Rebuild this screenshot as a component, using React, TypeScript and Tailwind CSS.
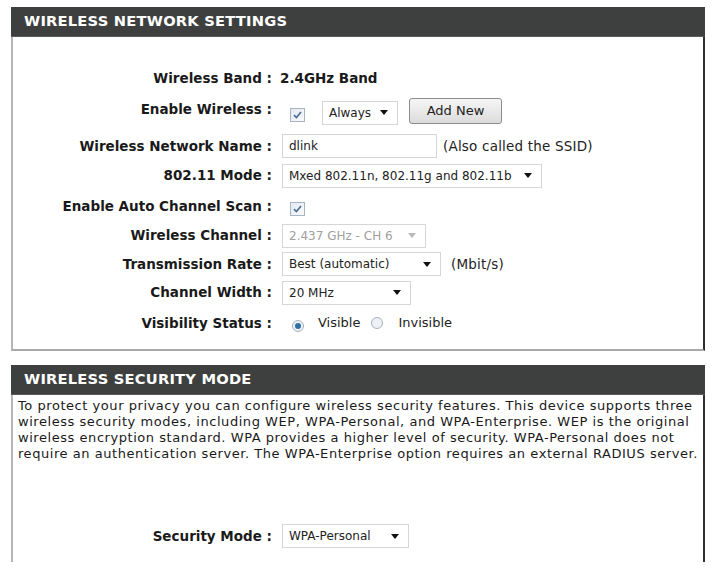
import React from "react";

const font = { fontFamily: '"DejaVu Sans", Verdana, sans-serif' };

const Check = () => (
  <span className="inline-flex h-[14px] w-[15px] items-center justify-center border border-[#a9b4c2] bg-gradient-to-br from-[#e4eaf2] to-[#f8fafc]">
    <svg width="9" height="8" viewBox="0 0 9 8">
      <path d="M1 4.2 L3.4 6.5 L8 1" fill="none" stroke="#4a6a96" strokeWidth="1.6" />
    </svg>
  </span>
);

const Arrow = ({ muted }: { muted?: boolean }) => (
  <svg width="8" height="5" viewBox="0 0 8 5" className="shrink-0">
    <path d="M0 0 H8 L4 5 Z" fill={muted ? "#b8b8b8" : "#111"} />
  </svg>
);

const Select = ({ text, w, muted }: { text: string; w: string; muted?: boolean }) => (
  <div className={`flex h-[24px] items-center justify-between border border-[#d6d6d6] bg-white pl-[6px] pr-[9px] text-[12px] ${w} ${muted ? "text-[#a0a0a0]" : "text-[#222]"}`}>
    <span className="whitespace-nowrap">{text}</span>
    <Arrow muted={muted} />
  </div>
);

const Row = ({ label, children, cls }: { label: string; children?: React.ReactNode; cls: string }) => (
  <div className={`flex items-center ${cls}`}>
    <div className="w-[259px] shrink-0 whitespace-nowrap text-right text-[13.5px] font-bold text-[#1a1a1a]">{label}</div>
    <div className="ml-[10px] flex items-center">{children}</div>
  </div>
);

const Radio = ({ on }: { on?: boolean }) => (
  <span className="inline-flex h-[12px] w-[12px] items-center justify-center rounded-full border border-[#a6b0bc] bg-[#eef1f5]">
    {on && <span className="h-[6px] w-[6px] rounded-full bg-[#2f6fa8]" />}
  </span>
);

const Header = ({ title }: { title: string }) => (
  <div className="flex h-[30px] items-center border-b border-b-[#5a5b5b] bg-[#3e3f3f] pl-[13px] text-[14.7px] font-bold tracking-[0.2px] text-white">
    {title}
  </div>
);

export default function App() {
  return (
    <div className="h-[574px] w-[713px] bg-white pt-[7px] pl-[11px]" style={font}>
      <div className="w-[694px]">
        <Header title="WIRELESS NETWORK SETTINGS" />
        <div className="h-[314px] border-l-2 border-r-2 border-b-2 border-l-[#b5b5b5] border-r-[#2e2e2e] border-b-[#a9a9a9] pt-[26px]">
          <Row label="Wireless Band :" cls="h-[30px]">
            <span className="ml-[-2px] text-[13.5px] font-bold text-[#1a1a1a]">2.4GHz Band</span>
          </Row>
          <Row label="Enable Wireless :" cls="mt-[1px] h-[30px]">
            <span className="ml-[8px] mt-[9px]"><Check /></span>
            <span className="ml-[17px] mt-[7px]"><Select text="Always" w="w-[76px]" /></span>
            <button className="ml-[11px] mt-[3px] h-[26px] w-[93px] rounded-[3px] border border-[#8c8c8c] bg-gradient-to-b from-[#f6f6f6] to-[#dcdcdc] text-[13px] text-[#222]">
              Add New
            </button>
          </Row>
          <Row label="Wireless Network Name :" cls="mt-[7px] h-[30px]">
            <div className="flex h-[24px] w-[155px] items-center border border-[#d6d6d6] pl-[6px] text-[12px] text-[#222]">dlink</div>
            <span className="ml-[6px] text-[13.5px] tracking-[0.2px] text-[#222]">(Also called the SSID)</span>
          </Row>
          <Row label="802.11 Mode :" cls="h-[29px]">
            <Select text="Mxed 802.11n, 802.11g and 802.11b" w="w-[260px]" />
          </Row>
          <Row label="Enable Auto Channel Scan :" cls="mt-[1px] h-[30px]">
            <span className="ml-[8px] mt-[4px]"><Check /></span>
          </Row>
          <Row label="Wireless Channel :" cls="h-[29px]">
            <Select text="2.437 GHz - CH 6" w="w-[144px]" muted />
          </Row>
          <Row label="Transmission Rate :" cls="h-[28px]">
            <Select text="Best (automatic)" w="w-[159px]" />
            <span className="ml-[10px] text-[13.5px] tracking-[0.2px] text-[#222]">(Mbit/s)</span>
          </Row>
          <Row label="Channel Width :" cls="h-[29px]">
            <Select text="20 MHz" w="w-[129px]" />
          </Row>
          <Row label="Visibility Status :" cls="mt-[1px] h-[30px]">
            <span className="ml-[10px] mt-[1px]"><Radio on /></span>
            <span className="ml-[14px] text-[13px] text-[#222]">Visible</span>
            <span className="ml-[11px] mt-[1px]"><Radio /></span>
            <span className="ml-[15px] text-[13px] text-[#222]">Invisible</span>
          </Row>
        </div>

        <div className="mt-[14px]">
          <Header title="WIRELESS SECURITY MODE" />
          <div className="h-[167px] border-l-2 border-r-2 border-l-[#b5b5b5] border-r-[#2e2e2e] pt-[3px] pl-[5px]">
            <p className="whitespace-nowrap text-[13px] leading-[16px] tracking-[0.55px] text-[#1a1a1a]">
              To protect your privacy you can configure wireless security features. This device supports three
              <br />
              wireless security modes, including WEP, WPA-Personal, and WPA-Enterprise. WEP is the original
              <br />
              wireless encryption standard. WPA provides a higher level of security. WPA-Personal does not
              <br />
              require an authentication server. The WPA-Enterprise option requires an external RADIUS server.
            </p>
            <div className="-ml-[5px] mt-[59px]">
              <Row label="Security Mode :" cls="h-[30px]">
                <Select text="WPA-Personal" w="w-[127px]" />
              </Row>
            </div>
          </div>
        </div>
      </div>
    </div>
  );
}
